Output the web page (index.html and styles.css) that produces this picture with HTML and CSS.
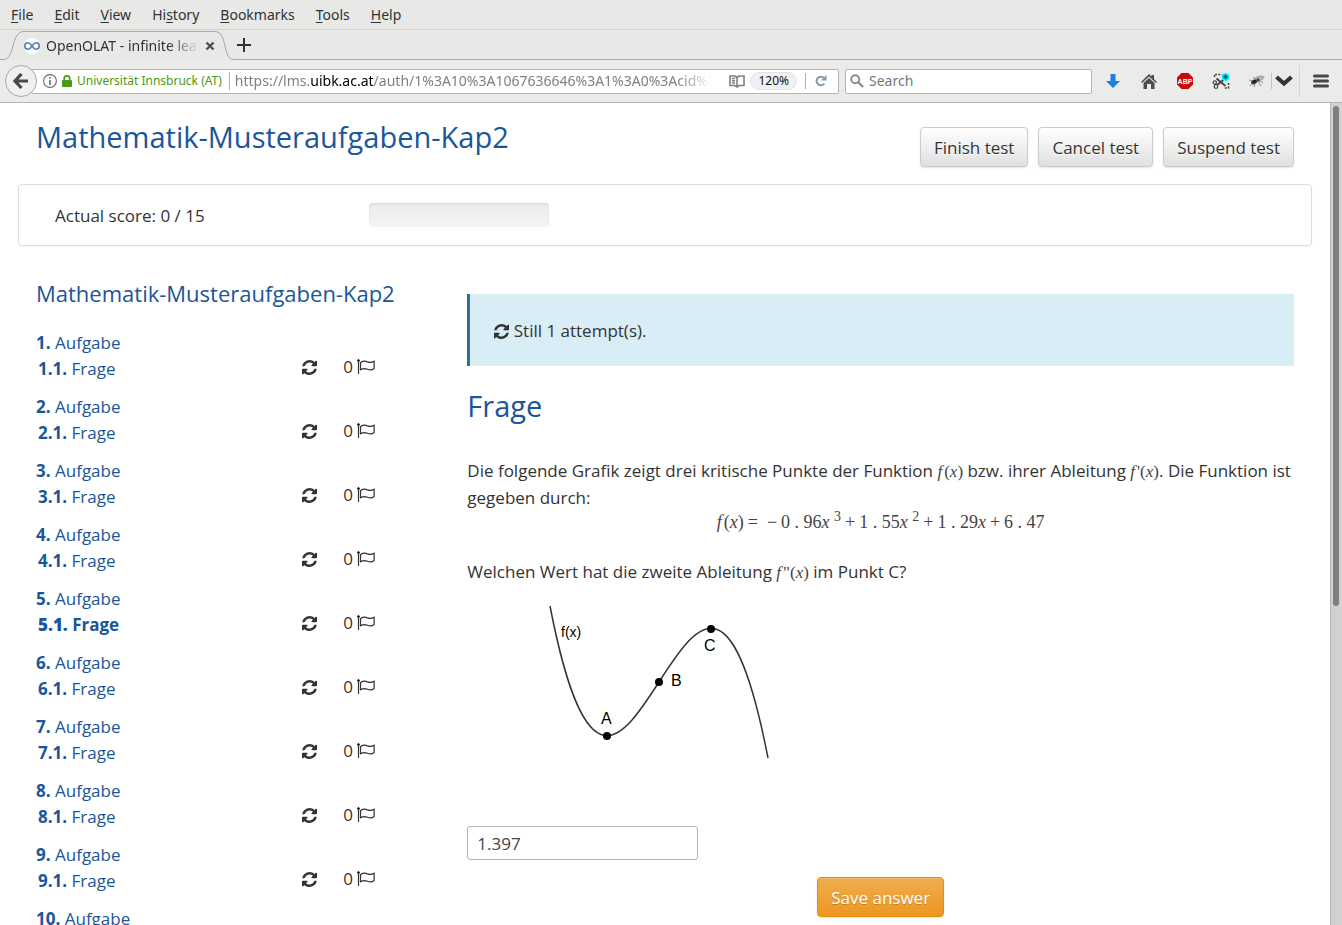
FILE: index.html
```html
<!DOCTYPE html>
<html lang="de">
<head>
    <meta charset="UTF-8">
    <meta name="viewport" content="width=device-width, initial-scale=1.0">
    <title>OpenOLAT - infinite learning</title>
    <link rel="stylesheet" href="styles.css">
</head>
<body>
    <svg class="symbols" width="0" height="0" aria-hidden="true">
        <symbol id="refresh" viewBox="0 0 1536 1536">
            <path d="M1511 928q0 5-1 7-64 268-268 434.500T764 1536q-146 0-282.500-55T238 1324l-129 129q-19 19-45 19t-45-19-19-45V960q0-26 19-45t45-19h448q26 0 45 19t19 45-19 45l-137 137q71 66 161 102t187 36q134 0 250-65t186-179q11-17 53-117 8-23 30-23h192q13 0 22.500 9.500t9.500 22.500zm25-800v448q0 26-19 45t-45 19h-448q-26 0-45-19t-19-45 19-45l138-138Q969 256 768 256q-134 0-250 65T332 500q-11 17-53 117-8 23-30 23H50q-13 0-22.500-9.500T18 608v-7q65-268 270-434.500T768 0q146 0 284 55.500T1297 212l130-129q19-19 45-19t45 19 19 45z"/>
        </symbol>
        <symbol id="flag" viewBox="0 0 18 15">
            <path d="M1.500 1v14" fill="none" stroke="currentColor" stroke-width="1.200"/>
            <circle cx="1.500" cy="1.400" r="1.200"/>
            <path d="M3.500 3.400c2-1.200 4.500-1.700 7-.5 2.500 1 4.500.5 6.600-.6v7.400c-2 1.100-4.100 1.600-6.600.5-2.500-1-5-.6-7 .6z" fill="none" stroke="currentColor" stroke-width="1.200"/>
        </symbol>
    </svg>

    <header class="browser">
        <nav class="menubar">
            <a href="#"><u>F</u>ile</a>
            <a href="#"><u>E</u>dit</a>
            <a href="#"><u>V</u>iew</a>
            <a href="#">Hi<u>s</u>tory</a>
            <a href="#"><u>B</u>ookmarks</a>
            <a href="#"><u>T</u>ools</a>
            <a href="#"><u>H</u>elp</a>
        </nav>

        <div class="tabstrip">
            <svg class="tab-edge" width="24" height="30" viewBox="0 0 24 30"><path d="M0 29.500h3C16 29.500 10 1.500 24 1.500" fill="none" stroke="#a3a7ab"/></svg>
            <div class="tab">
                <svg width="16" height="16" viewBox="0 0 16 16"><circle cx="8" cy="8" r="8" fill="#fff"/><path d="M8 8C6 5 5 4.800 4 4.800a3.200 3.200 0 0 0 0 6.400c1 0 2-.2 4-3.200s3-3.200 4-3.200a3.200 3.200 0 0 1 0 6.400c-1 0-2-.2-4-3.200z" fill="none" stroke="#4f79b0" stroke-width="1.500"/></svg>
                <span class="tab-title">OpenOLAT - infinite learning</span>
                <button class="icon-btn" aria-label="Close tab"><svg width="10" height="10" viewBox="0 0 10 10"><path d="M1.500 1.500l7 7m0-7l-7 7" stroke="#4c5052" stroke-width="2.400"/></svg></button>
            </div>
            <svg class="tab-edge" width="22" height="30" viewBox="0 0 22 30"><path d="M0 1.500C13 1.500 7 29.500 19 29.500h3" fill="none" stroke="#a3a7ab"/></svg>
            <div class="tab-rest">
                <button class="icon-btn" aria-label="New tab"><svg width="14" height="14" viewBox="0 0 14 14"><path d="M7 0v14M0 7h14" stroke="#2e3436" stroke-width="2"/></svg></button>
            </div>
        </div>

        <div class="navbar">
            <button class="back" aria-label="Back"><svg width="16" height="16" viewBox="0 0 16 16"><path d="M8.500 1L2 8l6.500 7M2.500 8H15" fill="none" stroke="#464a4b" stroke-width="3.200"/></svg></button>
            <div class="urlbar">
                <svg width="14" height="14" viewBox="0 0 14 14"><circle cx="7" cy="7" r="6.400" fill="none" stroke="#696969" stroke-width="1.100"/><path d="M7 3v1.800M7 6v5" stroke="#696969" stroke-width="1.600"/></svg>
                <svg width="10" height="12" viewBox="0 0 10 12"><path d="M2.200 6V3.700a2.800 2.800 0 0 1 5.600 0V6" fill="none" stroke="#4a9a1a" stroke-width="1.700"/><rect y="5" width="10" height="7" rx="1" fill="#4a9a1a"/></svg>
                <span class="identity">Universität Innsbruck (AT)</span>
                <span class="url">https://lms.<b>uibk.ac.at</b>/auth/1%3A10%3A1067636646%3A1%3A0%3Acid%3Acurrent</span>
                <svg width="16" height="13" viewBox="0 0 16 13"><path d="M1 1h5l2 1.500L10 1h5v9.500h-5L8 12l-2-1.500H1zM8 3v8M3 3.500h3M3 5.700h3M3 8h3" fill="none" stroke="#808080" stroke-width="1.600"/></svg>
                <span class="zoom-level">120%</span>
                <span class="divider"></span>
                <button class="icon-btn" aria-label="Reload"><svg width="12" height="12" viewBox="0 0 12 12"><path d="M9.300 8.500A4.300 4.300 0 1 1 9 3" fill="none" stroke="#8596ac" stroke-width="2"/><path d="M11.500 0v5.500H6z" fill="#8596ac"/></svg></button>
            </div>
            <label class="searchbar">
                <svg width="14" height="14" viewBox="0 0 14 14"><circle cx="5.200" cy="5.200" r="4" fill="none" stroke="#8d8d8d" stroke-width="1.900"/><path d="M8 8l5 5" stroke="#8d8d8d" stroke-width="2.400"/></svg>
                <input type="text" placeholder="Search" aria-label="Search">
            </label>
            <div class="tools">
                <button class="icon-btn" aria-label="Downloads"><svg width="14" height="14" viewBox="0 0 14 14"><path d="M4.500 0h5v7H14l-7 7-7-7h4.500z" fill="#1b80e6"/></svg></button>
                <button class="icon-btn" aria-label="Home"><svg width="16" height="15" viewBox="0 0 16 15"><path d="M8 0l2.500 2.500V1H13v4l3 3-1 1-7-6.500L1 9 0 8z" fill="#4a4e4f"/><path d="M8 4l5.500 5v6H10v-5H6v5H2.500V9z" fill="#4a4e4f"/></svg></button>
                <button class="icon-btn" aria-label="Adblock Plus"><svg width="18" height="18" viewBox="0 0 18 18"><path d="M5.500 1h7L17 5.500v7L12.500 17h-7L1 12.500v-7z" fill="#c80a0a"/><text x="9" y="11.800" class="abp">ABP</text></svg></button>
                <button class="icon-btn" aria-label="Screenshot"><svg width="18" height="16" viewBox="0 0 18 16"><path d="M3 1.500h7M2.500 2v3M16.500 10v5H12" fill="none" stroke="#454545" stroke-width="1.500" stroke-dasharray="2 1.300"/><path d="M4.500 5.500l9 7.500M11.500 7l-6.500 5" stroke="#454545" stroke-width="1.900"/><circle cx="2.800" cy="9.500" r="1.700" fill="none" stroke="#454545" stroke-width="1.200"/><circle cx="4" cy="13.500" r="1.800" fill="none" stroke="#454545" stroke-width="1.200"/><circle cx="13.500" cy="4" r="3.900" fill="#0ff"/><path d="M13.500 1.600v4.800M11.400 2.800l4.200 2.400M15.600 2.800l-4.200 2.400" stroke="#064a66" stroke-width="1.200"/></svg></button>
                <button class="icon-btn" aria-label="Firebug"><svg width="16" height="14" viewBox="0 0 16 14"><path d="M5 5C8 2 13 1 15 3c0 2-4 4-8 5z" fill="#b5b7b8" stroke="#858585" stroke-width=".7"/><ellipse cx="5" cy="8" rx="3" ry="2.200" transform="rotate(-25 5 8)" fill="#262626"/><circle cx="9" cy="6" r="1.700" fill="#454545"/><path d="M0 6l4 1M1 12l3-3M5 13l1-4M12 12L9 7M14 9l-4-3M4 3l2 3" stroke="#777" stroke-width=".8"/></svg></button>
            </div>
            <button class="icon-btn more" aria-label="More tools"><svg width="18" height="12" viewBox="0 0 18 12"><path d="M1.500 2L9 8.500 16.500 2" fill="none" stroke="#333" stroke-width="4"/></svg></button>
            <button class="icon-btn app-menu" aria-label="Menu"><svg width="16" height="14" viewBox="0 0 16 14"><path d="M1.500 2h13M1.500 7h13M1.500 12h13" stroke="#444849" stroke-width="3" stroke-linecap="round"/></svg></button>
        </div>
    </header>

    <div class="viewport">
        <main>
            <div class="page-head">
                <h1>Mathematik-Musteraufgaben-Kap2</h1>
                <div class="actions">
                    <button class="btn">Finish test</button>
                    <button class="btn">Cancel test</button>
                    <button class="btn">Suspend test</button>
                </div>
            </div>

            <section class="score">
                <span>Actual score: 0 / 15</span>
                <div class="progress" role="progressbar" aria-label="Score" aria-valuemin="0" aria-valuemax="15" aria-valuenow="0"></div>
            </section>

            <div class="columns">
                <nav class="toc">
                    <h4>Mathematik-Musteraufgaben-Kap2</h4>
                    <ul>
                        <li>
                            <a href="#"><b>1.</b> Aufgabe</a>
                            <div class="item"><a href="#"><b>1.1.</b> Frage</a><svg class="sync"><use href="#refresh"/></svg><span class="tries">0 <svg class="flag"><use href="#flag"/></svg></span></div>
                        </li>
                        <li>
                            <a href="#"><b>2.</b> Aufgabe</a>
                            <div class="item"><a href="#"><b>2.1.</b> Frage</a><svg class="sync"><use href="#refresh"/></svg><span class="tries">0 <svg class="flag"><use href="#flag"/></svg></span></div>
                        </li>
                        <li>
                            <a href="#"><b>3.</b> Aufgabe</a>
                            <div class="item"><a href="#"><b>3.1.</b> Frage</a><svg class="sync"><use href="#refresh"/></svg><span class="tries">0 <svg class="flag"><use href="#flag"/></svg></span></div>
                        </li>
                        <li>
                            <a href="#"><b>4.</b> Aufgabe</a>
                            <div class="item"><a href="#"><b>4.1.</b> Frage</a><svg class="sync"><use href="#refresh"/></svg><span class="tries">0 <svg class="flag"><use href="#flag"/></svg></span></div>
                        </li>
                        <li>
                            <a href="#"><b>5.</b> Aufgabe</a>
                            <div class="item active"><a href="#"><b>5.1.</b> Frage</a><svg class="sync"><use href="#refresh"/></svg><span class="tries">0 <svg class="flag"><use href="#flag"/></svg></span></div>
                        </li>
                        <li>
                            <a href="#"><b>6.</b> Aufgabe</a>
                            <div class="item"><a href="#"><b>6.1.</b> Frage</a><svg class="sync"><use href="#refresh"/></svg><span class="tries">0 <svg class="flag"><use href="#flag"/></svg></span></div>
                        </li>
                        <li>
                            <a href="#"><b>7.</b> Aufgabe</a>
                            <div class="item"><a href="#"><b>7.1.</b> Frage</a><svg class="sync"><use href="#refresh"/></svg><span class="tries">0 <svg class="flag"><use href="#flag"/></svg></span></div>
                        </li>
                        <li>
                            <a href="#"><b>8.</b> Aufgabe</a>
                            <div class="item"><a href="#"><b>8.1.</b> Frage</a><svg class="sync"><use href="#refresh"/></svg><span class="tries">0 <svg class="flag"><use href="#flag"/></svg></span></div>
                        </li>
                        <li>
                            <a href="#"><b>9.</b> Aufgabe</a>
                            <div class="item"><a href="#"><b>9.1.</b> Frage</a><svg class="sync"><use href="#refresh"/></svg><span class="tries">0 <svg class="flag"><use href="#flag"/></svg></span></div>
                        </li>
                        <li>
                            <a href="#"><b>10.</b> Aufgabe</a>
                        </li>
                    </ul>
                </nav>

                <form class="question">
                    <div class="note"><svg class="sync"><use href="#refresh"/></svg> Still 1 attempt(s).</div>
                    <h3>Frage</h3>
                    <p>Die folgende Grafik zeigt drei kritische Punkte der Funktion <span class="math"><i class="fn">f</i>(<i>x</i>)</span> bzw. ihrer Ableitung <span class="math"><i class="fn">f</i>'(<i>x</i>)</span>. Die Funktion ist gegeben durch:</p>
                    <div class="math formula">
                        <span><i class="fn">f</i>(<i>x</i>)</span>
                        <span>=</span>
                        <span class="neg">−</span>
                        <span>0 . 96<i>x</i> <sup>3</sup></span>
                        <span>+</span>
                        <span>1 . 55<i>x</i> <sup>2</sup></span>
                        <span>+</span>
                        <span>1 . 29<i>x</i></span>
                        <span>+</span>
                        <span>6 . 47</span>
                    </div>
                    <p><label for="answer">Welchen Wert hat die zweite Ableitung <span class="math"><i class="fn">f</i>"(<i>x</i>)</span> im Punkt C?</label></p>
                    <svg class="graph" width="340" height="222" viewBox="0 0 340 222">
                        <path d="M83 16C156 392 228 -208 301 168" fill="none" stroke="#333" stroke-width="1.500"/>
                        <circle cx="140" cy="146" r="4"/>
                        <circle cx="192" cy="92" r="4"/>
                        <circle cx="244" cy="39" r="4"/>
                        <text x="94" y="47" class="small">f(x)</text>
                        <text x="134" y="134">A</text>
                        <text x="204" y="96">B</text>
                        <text x="237" y="61">C</text>
                    </svg>
                    <input type="text" id="answer" value="1.397">
                    <button type="button" class="btn save">Save answer</button>
                </form>
            </div>
        </main>
        <div class="scrollbar"><div class="thumb"></div></div>
    </div>
</body>
</html>
```

FILE: styles.css
```css
* {
    box-sizing: border-box;
}
body {
    margin: 0;
    height: 100vh;
    display: flex;
    flex-direction: column;
    overflow: hidden;
    font-family: "Open Sans", sans-serif;
    font-size: 17px;
    line-height: 26px;
    color: #333;
    background-color: #fff;
}
svg {
    flex: none;
}
a {
    color: #1a569b;
    text-decoration: none;
}
.symbols {
    position: absolute;
}

/* browser window */
.browser {
    font-family: "Noto Sans", sans-serif;
    font-size: 14px;
    line-height: 20px;
    color: #2e3436;
    background-color: #e8e8e7;
}
.menubar {
    display: flex;
    gap: 21px;
    height: 30px;
    padding: 5px 11px;
    border-bottom: 1px solid #d2d2d0;
}
.menubar a {
    color: #2e3436;
}
.menubar u {
    text-underline-offset: 2px;
}
.icon-btn {
    display: flex;
    flex: none;
    align-items: center;
    justify-content: center;
    padding: 0;
    border: none;
    background: none;
}
.tabstrip {
    display: flex;
    height: 30px;
}
.tab {
    display: flex;
    align-items: center;
    gap: 6px;
    width: 191px;
    margin-top: 1px;
    border-top: 1px solid #a3a7ab;
}
.tab-title {
    flex: 1;
    overflow: hidden;
    white-space: nowrap;
    -webkit-mask-image: linear-gradient(to right, #000 80%, transparent);
    mask-image: linear-gradient(to right, #000 80%, transparent);
}
.tab-rest {
    flex: 1;
    display: flex;
    border-bottom: 1px solid #a3a7ab;
}
.navbar {
    display: flex;
    align-items: center;
    height: 43px;
    padding: 0 13px 0 5px;
    background-color: #ebebe9;
    border-bottom: 1px solid #b4b4b1;
}
.back {
    display: flex;
    flex: none;
    align-items: center;
    justify-content: center;
    width: 32px;
    height: 32px;
    padding: 0;
    border: 1px solid #a8a8a6;
    border-radius: 50%;
    background-color: #f0f0ef;
    z-index: 1;
}
.urlbar {
    display: flex;
    flex: 1;
    align-items: center;
    gap: 5px;
    min-width: 0;
    height: 25px;
    margin-left: -6px;
    padding: 0 11px;
    border: 1px solid #b4b4b1;
    border-radius: 2px;
    background-color: #fff;
}
.identity {
    flex: none;
    padding-right: 7px;
    border-right: 1px solid #b4b4b1;
    font-size: 12px;
    line-height: 18px;
    color: #4a9a1a;
}
.url {
    flex: 1;
    overflow: hidden;
    margin-right: 12px;
    white-space: nowrap;
    color: #808080;
    -webkit-mask-image: linear-gradient(to right, #000 93%, transparent);
    mask-image: linear-gradient(to right, #000 93%, transparent);
}
.url b {
    font-weight: 400;
    color: #000;
}
.zoom-level {
    padding: 0 7px;
    border: 1px solid #e3e3e3;
    border-radius: 9px;
    background-color: #f1f1f1;
    font-size: 12px;
    line-height: 16px;
    color: #111;
}
.divider {
    height: 16px;
    margin: 0 4px 0 3px;
    border-left: 1px solid #b4b4b1;
}
.searchbar {
    display: flex;
    align-items: center;
    gap: 5px;
    width: 247px;
    height: 25px;
    margin-left: 6px;
    padding: 0 4px;
    border: 1px solid #b4b4b1;
    border-radius: 2px;
    background-color: #fff;
}
.searchbar input {
    flex: 1;
    min-width: 0;
    padding: 0;
    border: none;
    outline: none;
    font: inherit;
    background: none;
}
.searchbar input::placeholder {
    color: #777;
}
.tools {
    display: flex;
    gap: 18px;
    margin-left: 12px;
}
.tools .icon-btn {
    width: 18px;
    height: 18px;
}
.abp {
    font-size: 7px;
    font-weight: 700;
    text-anchor: middle;
    fill: #fff;
}
.more {
    height: 16px;
    margin-left: 5px;
    padding-left: 3px;
    border-left: 1px solid #c4c4c2;
}
.app-menu {
    height: 32px;
    margin-left: 6px;
    padding-left: 13px;
    border-left: 1px solid #d6d6d4;
}

/* page */
.viewport {
    flex: 1;
    display: flex;
    min-height: 0;
}
main {
    flex: 1;
    overflow: hidden;
    padding: 14px 18px;
}
.scrollbar {
    width: 12px;
    padding: 3px 3px 0 2px;
    background-color: #d0d1d0;
    border-left: 1px solid #b4b4b1;
}
.thumb {
    height: 61%;
    border-radius: 4px;
    background-color: #7b7f80;
}
h1, h3, h4 {
    margin: 0;
    font-weight: 400;
    color: #1a569b;
}
h1, h3 {
    font-size: 29px;
    line-height: 40px;
}
h4 {
    font-size: 22px;
    line-height: 32px;
}
.page-head {
    display: flex;
    justify-content: space-between;
    padding: 0 18px;
}
.actions {
    display: flex;
    gap: 10px;
    padding-top: 10px;
}
.btn {
    height: 40px;
    padding: 2px 13px 0;
    border: 1px solid #ccc;
    border-radius: 4px;
    background-image: linear-gradient(#fff, #e0e0e0);
    box-shadow: inset 0 1px 0 rgba(255, 255, 255, 0.15), 0 1px 2px rgba(0, 0, 0, 0.1);
    text-shadow: 0 1px 0 #fff;
    font: inherit;
    color: #333;
}
.score {
    display: grid;
    grid-template-columns: 1fr 3fr;
    align-items: start;
    height: 62px;
    margin-top: 17px;
    padding: 18px 0 18px 36px;
    border: 1px solid #ddd;
    border-radius: 4px;
    box-shadow: 0 1px 1px rgba(0, 0, 0, 0.05);
}
.progress {
    width: 180px;
    height: 24px;
    border-radius: 4px;
    background-image: linear-gradient(#ebebeb, #f5f5f5);
    box-shadow: inset 0 1px 2px rgba(0, 0, 0, 0.1);
}
.columns {
    display: grid;
    grid-template-columns: 1fr 2fr;
    margin-top: 31px;
}
.toc {
    padding: 0 18px;
}
.toc ul {
    list-style: none;
    margin: 21px 0 0;
    padding: 0;
}
.toc li {
    margin-bottom: 12px;
}
.item {
    display: flex;
    align-items: flex-start;
    height: 26px;
    padding: 0 56px 0 2px;
}
.item a {
    flex: 1;
}
.active a {
    font-weight: 700;
}
.sync {
    width: 15px;
    height: 15px;
    fill: #333;
}
.item .sync {
    margin: 4px 26px 0 0;
}
.tries {
    line-height: 22px;
}
.flag {
    width: 18px;
    height: 15px;
    vertical-align: -1px;
}
.question {
    display: flex;
    flex-direction: column;
    align-items: flex-start;
    padding: 17px 18px 0;
}
.note {
    align-self: stretch;
    padding: 25px 24px 23px;
    border-left: 3px solid #31708f;
    background-color: #d9edf7;
    line-height: 24px;
}
.note .sync {
    vertical-align: -2px;
}
.question h3 {
    margin: 20px 0 31px;
}
p {
    margin: 0;
    line-height: 27px;
}
.math {
    font-family: "Liberation Serif", serif;
    line-height: 20px;
    color: #444;
}
.math .fn {
    padding-right: 2px;
}
.formula {
    display: flex;
    align-self: center;
    gap: 4px;
    font-size: 18px;
    line-height: 22px;
    margin-bottom: 25px;
}
.formula .neg {
    margin-left: 5px;
}
.formula sup {
    font-size: 14px;
    line-height: 0;
}
.graph {
    margin: 5px 0 14px;
    font-family: "Liberation Sans", sans-serif;
    font-size: 16px;
}
.graph .small {
    font-size: 14px;
}
#answer {
    width: 231px;
    height: 34px;
    padding: 0 9px;
    border: 1px solid #b4b4b4;
    border-radius: 3px;
    font: inherit;
    color: #444;
}
.save {
    align-self: center;
    margin-top: 17px;
    border-color: #e08e0b;
    background-image: linear-gradient(#f0ad4e, #ec971f);
    text-shadow: 0 1px 0 rgba(0, 0, 0, 0.2);
    color: #fff;
}
```
